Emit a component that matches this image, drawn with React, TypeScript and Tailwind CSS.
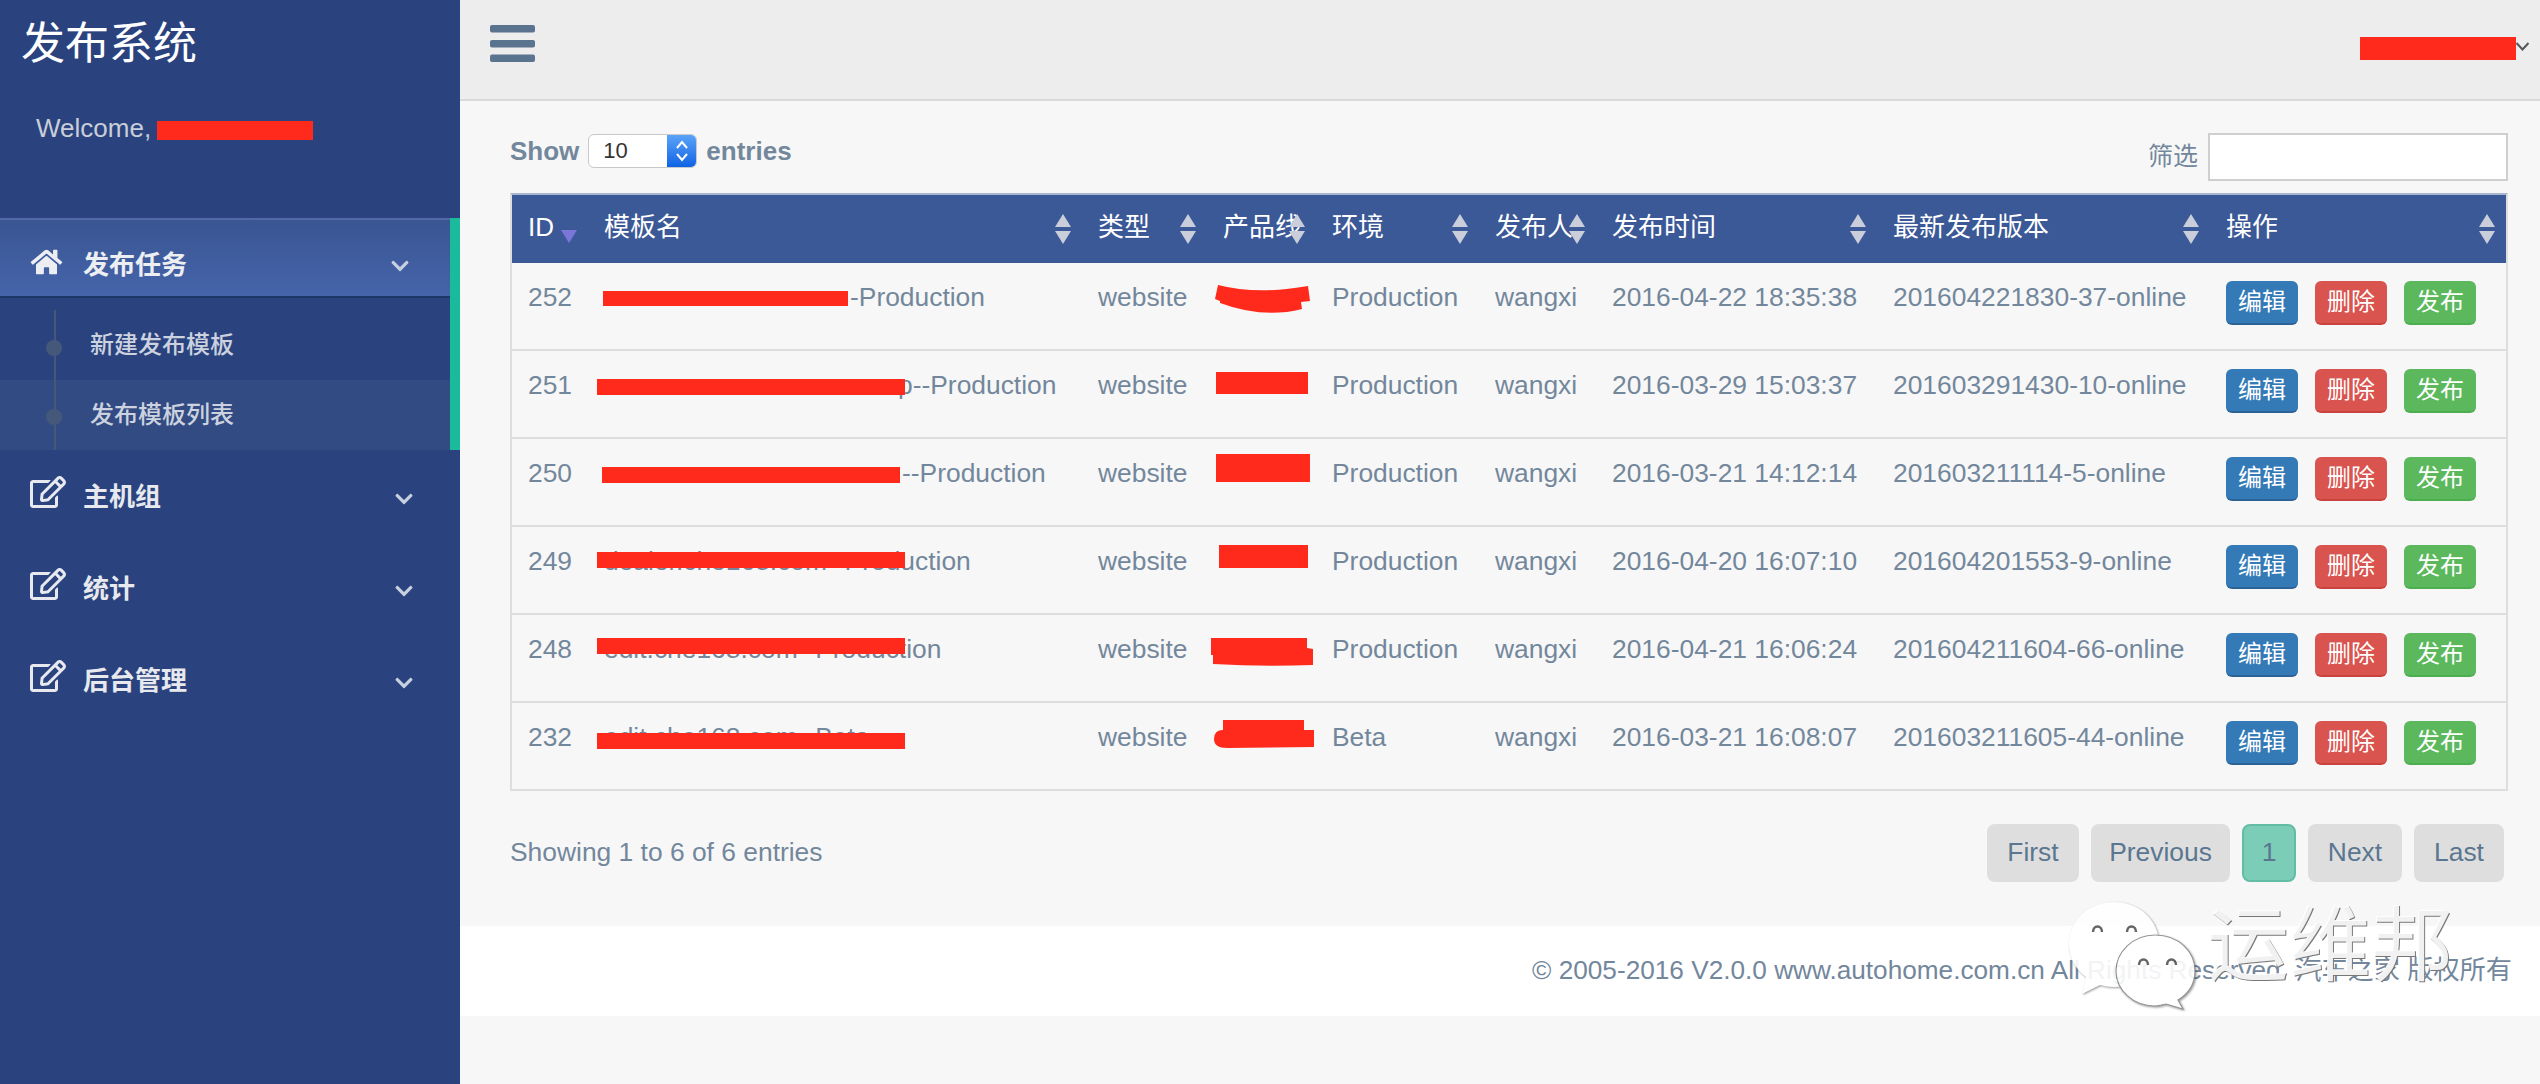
import { FaChevronDown, FaHome, FaRegEdit } from "react-icons/fa";

const FONT = "font-['Liberation_Sans','Noto_Sans_CJK_SC',sans-serif]";

type Row = {
  id: number;
  name: React.ReactNode;
  bar: string;
  blob: string;
  env: string;
  time: string;
  version: string;
};

const rows: Row[] = [
  {
    id: 252,
    name: (
      <>
        <span className="inline-block w-[246px]" />
        -Production
      </>
    ),
    bar: "left-[15px] top-[28px] w-[245px] h-[15px]",
    blob: "M11 22 Q50 32 101 23 L103 38 L94 39 L95 46 Q56 56 13 40 L13 38 L8 36 Z",
    env: "Production",
    time: "2016-04-22 18:35:38",
    version: "201604221830-37-online",
  },
  {
    id: 251,
    name: (
      <>
        <span className="inline-block w-[294px]" />
        p--Production
      </>
    ),
    bar: "left-[9px] top-[28px] w-[308px] h-[16px]",
    blob: "M9 21 H101 V43 H9 Z",
    env: "Production",
    time: "2016-03-29 15:03:37",
    version: "201603291430-10-online",
  },
  {
    id: 250,
    name: (
      <>
        <span className="inline-block w-[298px]" />
        --Production
      </>
    ),
    bar: "left-[14px] top-[28px] w-[298px] h-[16px]",
    blob: "M9 15 H103 V43 H9 Z",
    env: "Production",
    time: "2016-03-21 14:12:14",
    version: "201603211114-5-online",
  },
  {
    id: 249,
    name: "dealer.che168.com--Production",
    bar: "left-[9px] top-[25px] w-[308px] h-[16px]",
    blob: "M12 18 H101 V41 H12 Z",
    env: "Production",
    time: "2016-04-20 16:07:10",
    version: "201604201553-9-online",
  },
  {
    id: 248,
    name: "edit.che168.com--Production",
    bar: "left-[9px] top-[23px] w-[308px] h-[16px]",
    blob: "M4 23 H100 V33 L106 34 L106 50 Q56 52 6 49 L6 40 L4 40 Z",
    env: "Production",
    time: "2016-04-21 16:06:24",
    version: "201604211604-66-online",
  },
  {
    id: 232,
    name: "edit.che168.com--Beta",
    bar: "left-[9px] top-[30px] w-[308px] h-[16px]",
    blob: "M16 17 H97 V27 H107 V44 L20 45 Q7 45 7 36 Q7 27 16 27 Z",
    env: "Beta",
    time: "2016-03-21 16:08:07",
    version: "201603211605-44-online",
  },
];

const headers = [
  { label: "ID", width: "w-[76px]" },
  { label: "模板名", width: "w-[494px]" },
  { label: "类型", width: "w-[125px]" },
  { label: "产品线", width: "w-[109px]" },
  { label: "环境", width: "w-[163px]" },
  { label: "发布人", width: "w-[117px]" },
  { label: "发布时间", width: "w-[281px]" },
  { label: "最新发布版本", width: "w-[333px]" },
  { label: "操作", width: "w-[296px]" },
];

function SortIcon() {
  return (
    <svg
      className="absolute right-[11px] top-[19px]"
      width="16"
      height="30"
      viewBox="0 0 16 30"
    >
      <path d="M8 0 L16 13 H0 Z" fill="#c9ceda" />
      <path d="M0 17 H16 L8 30 Z" fill="#c9ceda" />
    </svg>
  );
}

function SideItem({ label }: { label: string }) {
  return (
    <div className="flex h-[92px] items-center pl-[30px] pr-[44px] text-[#e7e9ee]">
      <div className="w-[53px] pb-[10px]">
        <FaRegEdit className="h-[32px] w-[36px]" />
      </div>
      <span className="text-[26px] font-bold">{label}</span>
      <FaChevronDown className="ml-auto mt-[4px] h-[20px] w-[24px] text-[#c7d0e0]" />
    </div>
  );
}

function ActionButton({ label, color }: { label: string; color: string }) {
  return (
    <button
      className={`h-[44px] w-[72px] rounded-[6px] border-b-2 text-[24px] leading-[40px] text-white ${color}`}
    >
      {label}
    </button>
  );
}

function PageButton({ label, width, active }: { label: string; width: string; active?: boolean }) {
  return (
    <button
      className={
        active
          ? `h-[58px] rounded-[8px] border-2 border-[#62bda4] bg-[#7ccdb8] text-[26.4px] text-[#5a7690] ${width}`
          : `h-[58px] rounded-[8px] bg-[#dedede] text-[26.4px] text-[#5a7690] ${width}`
      }
    >
      {label}
    </button>
  );
}

function Watermark() {
  return (
    <div className="absolute left-[2069px] top-[902px] flex items-start">
      <svg
        width="130"
        height="108"
        viewBox="0 0 130 108"
        className="opacity-90 drop-shadow-[1px_1px_1px_rgba(0,0,0,0.45)]"
      >
        <path
          d="M45 0 C70 0 90 18 90 42 C90 66 70 85 45 85 C40 85 36 84 31 83 L13 92 L17 75 C6 67 0 55 0 42 C0 18 20 0 45 0 Z"
          fill="#fff"
        />
        <path
          d="M86 33 C110 33 126 50 126 69 C126 82 119 92 109 98 L114 107 L97 102 C93 103 90 104 86 104 C64 104 47 88 47 69 C47 50 64 33 86 33 Z"
          fill="#fff"
          stroke="#8a8a8a"
          strokeWidth="1.2"
        />
        <path d="M24 30 a4 5 0 0 1 9 0 M58 30 a4 5 0 0 1 9 0" fill="none" stroke="#555" strokeWidth="2.5" />
        <path d="M70 63 a4 5 0 0 1 9 0 M98 63 a4 5 0 0 1 9 0" fill="none" stroke="#555" strokeWidth="2.5" />
      </svg>
      <span className="ml-[8px] mt-[2px] text-[82px] leading-[84px] text-white/90 [text-shadow:1px_1px_0_#777]">
        运维邦
      </span>
    </div>
  );
}

export default function App() {
  return (
    <div className={`relative flex h-[1084px] w-[2540px] overflow-hidden bg-[#f7f7f7] text-[#73879c] ${FONT}`}>
      <aside className="flex w-[460px] shrink-0 flex-col bg-[#2a437f]">
        <div className="h-[218px]">
          <div className="pl-[21px] pt-[14px] text-[44px] leading-[60px] text-white">发布系统</div>
          <div className="mt-[36px] flex items-center pl-[36px] text-[26px] leading-[36px] text-[#c9ced9]">
            Welcome,
            <span className="ml-[6px] mt-[4px] h-[19px] w-[156px] bg-[#ff2a1c]" />
          </div>
        </div>

        <div className="border-r-[10px] border-[#1abb9c]">
          <div className="flex h-[80px] items-center border-y-2 border-b-[#1f3768] border-t-[#4f6aa6] bg-gradient-to-b from-[#3a5592] to-[#4564aa] pl-[30px] pr-[38px] pt-[14px] text-[#eceef2]">
            <div className="w-[53px] pb-[6px]">
              <FaHome className="h-[28px] w-[33px]" />
            </div>
            <span className="text-[26px] font-bold">发布任务</span>
            <FaChevronDown className="ml-auto mt-[2px] h-[20px] w-[24px] text-[#c7d0e0]" />
          </div>

          <div className="relative text-[24px] font-medium text-[#ccd2df]">
            <div className="flex h-[82px] items-end pb-[17px] pl-[90px] leading-[36px]">新建发布模板</div>
            <div className="flex h-[70px] items-center bg-[#334b83] pl-[90px]">发布模板列表</div>
            <span className="absolute bottom-0 left-[54px] top-[12px] w-[2px] bg-[#46587a]" />
            <span className="absolute left-[46px] top-[42px] h-[16px] w-[16px] rounded-full bg-[#46587a]" />
            <span className="absolute left-[46px] top-[111px] h-[16px] w-[16px] rounded-full bg-[#46587a]" />
          </div>
        </div>

        <div className="pt-[1px]">
          <SideItem label="主机组" />
          <SideItem label="统计" />
          <SideItem label="后台管理" />
        </div>
      </aside>

      <main className="flex min-w-0 flex-1 flex-col">
        <header className="flex h-[101px] items-start justify-between border-b-2 border-[#d9d9d9] bg-[#ededed] pl-[30px] pr-[11px] pt-[25px]">
          <svg width="45" height="37" viewBox="0 0 45 37" fill="#5a738e">
            <rect width="45" height="7.5" rx="2" />
            <rect y="15" width="45" height="7.5" rx="2" />
            <rect y="29.5" width="45" height="7.5" rx="2" />
          </svg>
          <div className="mt-[12px] flex items-start">
            <span className="h-[23px] w-[156px] bg-[#ff2a1c]" />
            <svg className="mt-[5px]" width="13" height="9" viewBox="0 0 13 9" fill="none" stroke="#555" strokeWidth="2">
              <path d="M0.5 1 L6.5 7.5 L12.5 1" />
            </svg>
          </div>
        </header>

        <section className="pl-[50px] pr-[32px] pt-[32px]">
          <div className="mb-[12px] flex items-start justify-between">
            <div className="mt-[1px] flex h-[34px] items-center text-[26px] font-bold">
              Show
              <div className="mx-[9px] flex h-[34px] w-[109px] overflow-hidden rounded-[6px] border border-[#c9c9c9] bg-white">
                <span className="flex-1 pl-[14px] text-[22px] font-normal leading-[32px] text-[#333]">10</span>
                <span className="flex w-[29px] items-center justify-center bg-gradient-to-b from-[#5aa2f8] to-[#0c63e4]">
                  <svg width="14" height="24" viewBox="0 0 14 24" fill="none" stroke="#fff" strokeWidth="2">
                    <path d="M2 9 L7 3 L12 9 M2 15 L7 21 L12 15" />
                  </svg>
                </span>
              </div>
              entries
            </div>
            <label className="flex items-center text-[25px]">
              筛选
              <input className="ml-[10px] h-[48px] w-[300px] border-2 border-[#cfcfcf] bg-white" />
            </label>
          </div>

          <div className="border-x-2 border-t-2 border-x-[#dedede] border-t-[#a9b6d0]">
            <table className="w-[1994px] table-fixed border-separate border-spacing-0 text-[26.4px] leading-[36px]">
              <thead>
                <tr className="h-[68px] bg-[#3b5897] text-white">
                  {headers.map((h) => (
                    <th
                      key={h.label}
                      className={`relative whitespace-nowrap px-4 pb-[4px] text-left text-[26px] font-normal ${h.width}`}
                    >
                      {h.label}
                      {h.label === "ID" ? (
                        <svg className="absolute left-[49px] top-[35px]" width="16" height="13" viewBox="0 0 16 13">
                          <path d="M0 0 H16 L8 13 Z" fill="#7b77d9" />
                        </svg>
                      ) : (
                        <SortIcon />
                      )}
                    </th>
                  ))}
                </tr>
              </thead>
              <tbody>
                {rows.map((r) => (
                  <tr key={r.id} className="h-[88px]">
                    <td className="border-b-2 border-[#dedede] px-4 pt-4 align-top">{r.id}</td>
                    <td className="relative border-b-2 border-[#dedede] px-4 pt-4 align-top whitespace-nowrap">
                      {r.name}
                      <span className={`absolute bg-[#ff2a1c] ${r.bar}`} />
                    </td>
                    <td className="border-b-2 border-[#dedede] px-4 pt-4 align-top">website</td>
                    <td className="relative border-b-2 border-[#dedede]">
                      <svg className="absolute left-0 top-0" width="109" height="88" viewBox="0 0 109 88">
                        <path d={r.blob} fill="#ff2a1c" />
                      </svg>
                    </td>
                    <td className="border-b-2 border-[#dedede] px-4 pt-4 align-top">{r.env}</td>
                    <td className="border-b-2 border-[#dedede] px-4 pt-4 align-top">wangxi</td>
                    <td className="border-b-2 border-[#dedede] px-4 pt-4 align-top whitespace-nowrap">{r.time}</td>
                    <td className="border-b-2 border-[#dedede] px-4 pt-4 align-top whitespace-nowrap">{r.version}</td>
                    <td className="border-b-2 border-[#dedede] px-4 pt-[18px] align-top">
                      <div className="flex gap-[17px]">
                        <ActionButton label="编辑" color="border-[#2a6496] bg-[#337ab7]" />
                        <ActionButton label="删除" color="border-[#c9423e] bg-[#d9534f]" />
                        <ActionButton label="发布" color="border-[#4cae4c] bg-[#5cb85c]" />
                      </div>
                    </td>
                  </tr>
                ))}
              </tbody>
            </table>
          </div>

          <div className="mt-[33px] flex items-center justify-between pr-[4px]">
            <span className="text-[26.4px]">Showing 1 to 6 of 6 entries</span>
            <div className="flex gap-[12px]">
              <PageButton label="First" width="w-[92px]" />
              <PageButton label="Previous" width="w-[139px]" />
              <PageButton label="1" width="w-[54px]" active />
              <PageButton label="Next" width="w-[94px]" />
              <PageButton label="Last" width="w-[90px]" />
            </div>
          </div>
        </section>

        <footer className="mt-[44px] flex h-[90px] items-center justify-end bg-white pr-[28px] text-[26.2px]">
          © 2005-2016 V2.0.0 www.autohome.com.cn All Rights Reserved. 汽车之家 版权所有
        </footer>
      </main>

      <Watermark />
    </div>
  );
}
